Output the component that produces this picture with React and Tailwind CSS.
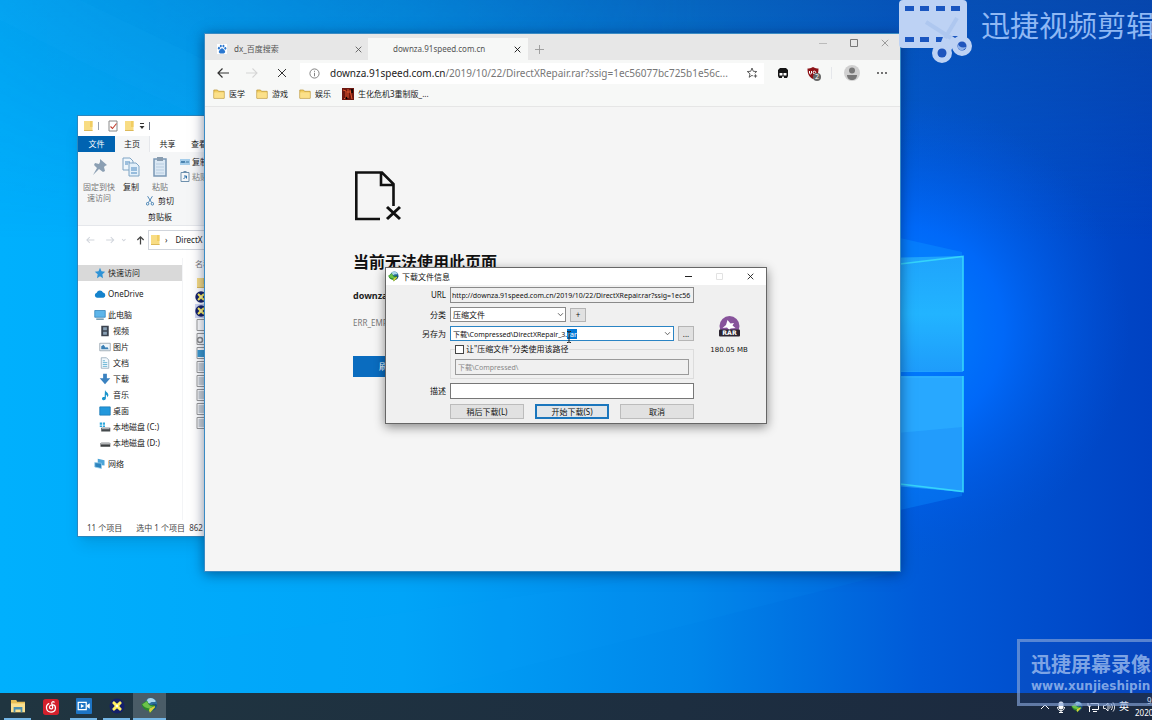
import React, { useEffect, useRef } from "react";

const Wallpaper = () => (
  <svg className="absolute inset-0 h-full w-full" viewBox="0 0 1152 720" preserveAspectRatio="none" aria-hidden="true">
    <defs>
      <linearGradient id="base" x1="0" y1="0" x2="1152" y2="0" gradientUnits="userSpaceOnUse">
        <stop offset="0" stopColor="#00b0fd" />
        <stop offset="0.35" stopColor="#00a4f8" />
        <stop offset="0.6" stopColor="#0086ea" />
        <stop offset="0.8" stopColor="#005ad8" />
        <stop offset="1" stopColor="#0042c2" />
      </linearGradient>
      <linearGradient id="top" x1="0" y1="0" x2="0" y2="240" gradientUnits="userSpaceOnUse">
        <stop offset="0" stopColor="#0b4a9c" stopOpacity="0.55" />
        <stop offset="1" stopColor="#0b4a9c" stopOpacity="0" />
      </linearGradient>
      <linearGradient id="topFade" x1="0" y1="0" x2="700" y2="0" gradientUnits="userSpaceOnUse">
        <stop offset="0" stopColor="#fff" stopOpacity="0.25" />
        <stop offset="1" stopColor="#fff" />
      </linearGradient>
      <mask id="fade">
        <rect width="1152" height="720" fill="url(#topFade)" />
      </mask>
      <radialGradient id="glow" cx="900" cy="330" r="230" gradientUnits="userSpaceOnUse">
        <stop offset="0" stopColor="#0084ff" />
        <stop offset="0.45" stopColor="#006cff" stopOpacity="0.85" />
        <stop offset="1" stopColor="#0054e0" stopOpacity="0" />
      </radialGradient>
      <linearGradient id="pane" x1="0" y1="0" x2="0" y2="1">
        <stop offset="0" stopColor="#1fa4fc" />
        <stop offset="0.5" stopColor="#22b4ff" />
        <stop offset="1" stopColor="#1e9cfb" />
      </linearGradient>
    </defs>
    <rect width="1152" height="720" fill="url(#base)" />
    <rect width="1152" height="240" fill="url(#top)" mask="url(#fade)" />
    <rect width="1152" height="720" fill="url(#glow)" />
    <path d="M900 238 962 252V256L900 264Z" fill="#0a8cff" opacity="0.5" />
    <path d="M900 484 962 492V496L900 510Z" fill="#0a8cff" opacity="0.4" />
    <path d="M0 0H80L205 60V120L78 60 0 20Z" fill="#22b8ff" opacity="0.08" />
    <path d="M205 640 700 571H900L420 693H205Z" fill="#12a0ff" opacity="0.08" />
    <path d="M600 265 963 256V371L600 372Z" fill="url(#pane)" />
    <path d="M600 377 963 376V492L600 460Z" fill="#229cfc" />
    <path d="M600 377 963 376V427L600 460Z" fill="#28a8ff" />
    <path d="M900 264 963 256.500V371M963 376V491.500L900 484" fill="none" stroke="#35d4fb" strokeWidth="1.600" />
    <path d="M900 371.500H963M900 377H963" stroke="#35bcff" strokeWidth="0.600" />
  </svg>
);

const Folder = ({ className = "h-3 w-3" }) => (
  <svg viewBox="0 0 12 12" className={className} aria-hidden="true">
    <path d="M.8 2h3.700l1 1.300h5.700v7H.8z" fill="#f3cf62" stroke="#b98f2c" strokeWidth="0.700" />
    <path d="M1.200 4.400h9.600v5.500H1.200z" fill="#fbe08a" />
  </svg>
);

const FolderTall = ({ className = "h-3 w-3 shrink-0" }) => (
  <svg viewBox="0 0 12 12" className={className} aria-hidden="true">
    <path d="M2 1h8.500v10H2z" fill="#f8dc83" />
    <path d="M8 1h2.500v6H8z" fill="#f1cd62" />
    <path d="M2 10h8.500v1H2z" fill="#dcb95a" />
  </svg>
);

const Cross = ({ className, width = 1.2 }) => (
  <svg viewBox="0 0 10 10" className={className} fill="none" stroke="currentColor" strokeWidth={width} aria-hidden="true">
    <path d="M1 1l8 8M9 1L1 9" />
  </svg>
);

const Chevron = ({ className }) => (
  <svg viewBox="0 0 10 10" className={className} fill="none" stroke="currentColor" strokeWidth="1.300" aria-hidden="true">
    <path d="M1.500 3.200L5 6.800l3.500-3.600" />
  </svg>
);

const Globe = ({ className }) => (
  <svg viewBox="0 0 20 20" className={className} aria-hidden="true">
    <circle cx="11.500" cy="8.500" r="7.500" fill="#2d6f9c" />
    <path d="M8 2c4-2 8 0 9.500 3-2 2-4 0-6 1.500S8 8 6 6z" fill="#a9d6ea" />
    <path d="M13 9c2-2 4-1 6 0-.5 4-3 7-6 7z" fill="#1d4f7c" />
    <path d="M.5 8.500L7 4l2 3.500c1.500 2 4 2.500 6.500 1.500L17 12l-6.500 7L9 16C5 16 2 13 .5 8.500z" fill="#2a8a2c" />
    <path d="M1.500 8.500L7 5l1.500 3c1.500 2.500 3.500 3.500 6.500 2.500l-5 3C6 13 3 12 1.500 8.500z" fill="#6cc24a" />
    <path d="M10 13.500l6-3 .5 1.500-6 6.500-1-2.500z" fill="#d9cf3a" />
  </svg>
);

const Film = () => (
  <svg viewBox="0 0 18 18" className="h-4 w-4" aria-hidden="true">
    <rect width="18" height="18" rx="1" fill="#1d74c4" />
    <path d="M2.500 5h9v8h-9z" fill="none" stroke="#fff" strokeWidth="1.400" />
    <path d="M5.500 6.800v4.400L9.300 9zM12.500 8l3-2v6l-3-2z" fill="#fff" />
  </svg>
);

const CrossBall = ({ className }) => (
  <svg viewBox="0 0 18 18" className={className} aria-hidden="true">
    <circle cx="9" cy="9" r="8.500" fill="#14206a" />
    <path d="M3.500 5.500l2-2L9 6.500l3.500-3 2 2-3 3.500 3 3.500-2 2L9 11.500l-3.500 3-2-2L6.500 9z" fill="#ffef62" />
    <circle cx="9" cy="9" r="1.300" fill="#fff" />
  </svg>
);

const sideIcons = {
  star: <path d="M8 1l2 4.600 5 .6-3.800 3.300L12 15l-4-2.700L4 15l.9-5.300L1 6.200l5-.6z" fill="#2f93d6" />,
  cloud: <path d="M4 13a3.500 3.500 0 01-.4-6.800A4.500 4.500 0 0112 6a3.600 3.600 0 01.6 7z" fill="#1583cc" />,
  pc: (
    <>
      <path d="M1 2h14v9H1z" fill="#5db5ea" stroke="#2c7fb5" />
      <path d="M3 13.500h10" stroke="#3f7391" strokeWidth="1.500" />
    </>
  ),
  video: (
    <>
      <path d="M3 1h10v14H3z" fill="#3c4450" />
      <path d="M5.500 3h5v4h-5zM5.500 9h5v4h-5z" fill="#8aa1b5" />
    </>
  ),
  image: (
    <>
      <path d="M1 3h14v10H1z" fill="#eef5fa" stroke="#8b9aa5" />
      <path d="M3 11V7l3-2 3 4 2-1 2 3z" fill="#3a7fb5" />
    </>
  ),
  doc: (
    <>
      <path d="M3 1h7l3 3v11H3z" fill="#f1f8fc" stroke="#8ba3b3" />
      <path d="M5 5h3M5 7.500h6M5 10h6M5 12.500h6" stroke="#48a5cc" />
    </>
  ),
  down: <path d="M5.500 1h5v6H15l-7 8-7-8h4.500z" fill="#3b82c0" />,
  music: <path d="M8 1c.5 3 4.500 3.500 4.500 7.500L11 11c0-3-1.500-3.500-1.800-3.500V12c0 4-5.700 3.500-5.200.5.300-1.800 2.500-2.300 3.500-1.700z" fill="#1a94cc" />,
  desk: <path d="M1 2.500h14v11H1z" fill="#2298dc" stroke="#1a78b4" />,
  diskC: (
    <>
      <path d="M1 2h3v3H1zM5 2h3v3H5zM1 6h3v2H1zM5 6h3v2H5z" fill="#2ba7dc" />
      <path d="M3 9h12v5H3z" fill="#454a4d" />
      <path d="M4 9h10v2H4z" fill="#a9afb3" />
    </>
  ),
  disk: (
    <>
      <path d="M2 8h13v5H2z" fill="#3d3f41" />
      <path d="M3 7h11l1 3H2z" fill="#b4b6b8" />
    </>
  ),
  net: (
    <>
      <path d="M5 1l9 2v7l-9-1z" fill="#4ba4d8" />
      <path d="M1 6l9 1v7l-9-2z" fill="#2d83bd" stroke="#9ad0ec" />
    </>
  ),
};

const sideGroups = [
  { icon: "star", name: "快速访问", selected: true },
  { icon: "cloud", name: "OneDrive" },
  {
    icon: "pc",
    name: "此电脑",
    children: [
      { icon: "video", name: "视频" },
      { icon: "image", name: "图片" },
      { icon: "doc", name: "文档" },
      { icon: "down", name: "下载" },
      { icon: "music", name: "音乐" },
      { icon: "desk", name: "桌面" },
      { icon: "diskC", name: "本地磁盘 (C:)" },
      { icon: "disk", name: "本地磁盘 (D:)" },
    ],
  },
  { icon: "net", name: "网络" },
];

const SideRow = ({ item, nested }) => (
  <a
    href="#"
    className={`flex h-4 items-center gap-[2px] whitespace-nowrap ${nested ? "pl-[21px]" : "pl-4"} ${item.selected ? "bg-[#d9d9d9]" : ""}`}
  >
    <svg viewBox="0 0 16 16" className="h-3 w-3 shrink-0" fill="none" aria-hidden="true">
      {sideIcons[item.icon]}
    </svg>
    {item.name}
  </a>
);

const FileIcon = ({ kind }) => {
  if (kind === "folder") return <FolderTall />;
  if (kind === "app") return <CrossBall className="h-3 w-3 shrink-0" />;
  return (
    <svg viewBox="0 0 12 12" className="h-3 w-3 shrink-0" fill="none" aria-hidden="true">
      <path d="M2 .5h8v11H2z" fill="#fff" stroke="#9a9a9a" />
      {kind === "text" && <path d="M3.500 3h6M3.500 5h6M3.500 7h6M3.500 9h6" stroke="#9aa5ad" />}
      {kind === "gear" && <circle cx="5" cy="7" r="2.500" stroke="#8d8d8d" strokeWidth="1.500" />}
      {kind === "image" && <path d="M2.500 3h7v7h-7z" fill="#3d9bd0" />}
    </svg>
  );
};

const files = ["folder", "app", "app", "blank", "gear", "image", "text", "text", "text", "text", "text"];

function Explorer() {
  return (
    <section className="absolute left-[77px] top-[115px] flex h-[422px] w-[140px] flex-col overflow-hidden border border-[#2c86bd] bg-white font-['Noto_Sans','Noto_Sans_CJK_SC',sans-serif] text-[8px] text-[#222] shadow-lg">
      <div className="flex h-5 shrink-0 items-center gap-1 pl-1">
        <FolderTall />
        <span className="h-2 w-px bg-gray-400" />
        <svg viewBox="0 0 12 12" className="ml-1 h-3 w-3" fill="none" aria-hidden="true">
          <path d="M2 1h8v10H2z" stroke="#8a8a8a" />
          <path d="M3.500 6.500l2 2 4-5" stroke="#c2402f" strokeWidth="1.100" />
        </svg>
        <FolderTall />
        <svg viewBox="0 0 6 8" className="h-2 w-[6px]" aria-hidden="true">
          <path d="M1 1h4v1H1zM.5 4h5L3 7z" fill="#333" />
        </svg>
        <span className="h-2 w-px bg-gray-500" />
      </div>

      <div className="flex h-4 shrink-0 whitespace-nowrap">
        <button className="w-[37px] shrink-0 bg-[#0063b1] text-white">文件</button>
        <button className="w-[35px] shrink-0 border-r border-gray-200 bg-[#f5f6f7]">主页</button>
        <button className="w-[35px] shrink-0">共享</button>
        <button className="w-7 shrink-0">查看</button>
      </div>

      <div className="flex h-[74px] shrink-0 items-start border-b border-gray-200 bg-[#f5f6f7] pt-1 leading-[11px]">
        <button className="flex w-[42px] shrink-0 flex-col items-center gap-[3px] text-[#777]">
          <svg viewBox="0 0 20 20" className="h-[22px] w-5" aria-hidden="true">
            <path d="M11 2l7 6-2 1-1 1 1 4-2 1-4-3-6 6 4-7-3-3 1-2 4 1 1-2z" fill="#8b9fb3" />
          </svg>
          <span>固定到快<br />速访问</span>
        </button>
        <button className="flex w-[22px] shrink-0 flex-col items-center gap-[3px]">
          <svg viewBox="0 0 20 20" className="h-[22px] w-5" fill="none" stroke="#7fa4c4" aria-hidden="true">
            <path d="M2 1h7l3 3v9H2z" fill="#eef6fc" />
            <path d="M8 6h7l3 3v10H8z" fill="#e3f0fa" />
            <path d="M4 5h5M4 7h3M10 11h6M10 13h6M10 16h6" stroke="#4b88bf" />
          </svg>
          <span>复制</span>
        </button>
        <div className="flex w-9 shrink-0 flex-col items-center gap-[3px] whitespace-nowrap">
          <button className="flex flex-col items-center gap-[3px] text-[#777]">
            <svg viewBox="0 0 20 20" className="h-[22px] w-5" fill="none" aria-hidden="true">
              <path d="M4 2h12v17H4z" fill="#dbe8f4" stroke="#7b98b5" strokeWidth="1.500" />
              <path d="M7 0h6v4H7z" fill="#8a9db0" />
              <path d="M6 7h8M6 10h8M6 13h8M6 16h8" stroke="#b7cce0" />
            </svg>
            <span>粘贴</span>
          </button>
          <button className="flex items-center gap-1">
            <svg viewBox="0 0 10 12" className="h-[10px] w-2" fill="none" stroke="#2a6fa8" aria-hidden="true">
              <path d="M2 0l5 8M8 0L3 8" />
              <circle cx="2" cy="9.500" r="1.600" />
              <circle cx="8" cy="9.500" r="1.600" />
            </svg>
            剪切
          </button>
          <span className="pt-[2px]">剪贴板</span>
        </div>
        <div className="flex shrink-0 flex-col gap-1 whitespace-nowrap pl-[2px]">
          <span className="flex items-center gap-[2px]">
            <svg viewBox="0 0 10 8" className="h-2 w-[10px]" aria-hidden="true">
              <path d="M0 1h10v6H0z" fill="#a5cdea" />
              <path d="M1 5l1-2 1 2 1-2 1 2M6 4h3" fill="none" stroke="#205f93" strokeWidth="0.800" />
            </svg>
            复制
          </span>
          <span className="flex items-center gap-[2px] text-[#888]">
            <svg viewBox="0 0 10 11" className="h-[11px] w-[10px]" fill="none" stroke="#6e90ad" aria-hidden="true">
              <path d="M1 1.500h8v9H1zM3.500.5h3" />
              <path d="M3.500 8l3-3M4 5h2.500v2.500" stroke="#2a6fa8" />
            </svg>
            粘贴
          </span>
        </div>
      </div>

      <div className="flex h-7 shrink-0 items-center">
        <div className="flex w-[70px] shrink-0 items-center gap-2 pl-2 text-gray-300">
          <svg viewBox="0 0 50 10" className="h-[10px] w-[42px]" fill="none" stroke="currentColor" strokeWidth="1.200" aria-hidden="true">
            <path d="M10 5H1M4.500 1.500L1 5l3.500 3.500M24 5h9M29.500 1.500L33 5l-3.500 3.500M43 4l2 2 2-2" />
          </svg>
          <svg viewBox="0 0 10 10" className="h-[9px] w-[9px]" fill="none" stroke="#444" strokeWidth="1.400" aria-hidden="true">
            <path d="M5 9.500V1M1.500 4.500L5 1l3.500 3.500" />
          </svg>
        </div>
        <div className="flex h-5 w-20 shrink-0 items-center gap-1 border border-gray-300">
          <FolderTall />
          <span>›</span>
          <span className="ml-1">DirectX</span>
        </div>
      </div>

      <div className="flex min-h-0 flex-1 pt-1">
        <nav className="flex w-[104px] shrink-0 flex-col gap-[5px] pt-[7px]">
          {sideGroups.map((group) => (
            <div key={group.name}>
              <SideRow item={group} />
              {group.children && group.children.map((child) => <SideRow key={child.name} item={child} nested />)}
            </div>
          ))}
        </nav>
        <div className="flex flex-col border-l border-gray-100 pl-3">
          <span className="flex h-[18px] items-start whitespace-nowrap text-[#777]">名称</span>
          {files.map((kind, index) => (
            <span key={index} className={`flex h-[14px] w-6 items-center ${index === 2 ? "bg-[#cfd6f2]" : ""}`}>
              <FileIcon kind={kind} />
            </span>
          ))}
        </div>
      </div>

      <div className="flex h-4 shrink-0 items-center gap-[14px] whitespace-nowrap pl-[9px] text-[#444]">
        <span>11 个项目</span>
        <span>选中 1 个项目&nbsp; 862</span>
      </div>
    </section>
  );
}

const bookmarks = ["医学", "游戏", "娱乐"];

function Browser() {
  return (
    <section className="absolute left-[204px] top-[33px] flex h-[539px] w-[697px] flex-col border border-[#3a8bc4] bg-[#f5f5f5] font-['Noto_Sans','Noto_Sans_CJK_SC',sans-serif] shadow-[0_2px_12px_rgba(0,20,60,0.5)]">
      <div className="flex h-[26px] shrink-0 items-end bg-[#e7e7e7] text-[8px] text-[#555]">
        <div className="flex h-[22px] w-[163px] items-center gap-1 pl-3 pr-[6px]">
          <svg viewBox="0 0 12 12" className="h-[10px] w-[10px]" aria-hidden="true">
            <rect width="12" height="12" fill="#fff" />
            <g fill="#2b78d0">
              <ellipse cx="2.300" cy="5" rx="1.200" ry="1.600" />
              <ellipse cx="4.600" cy="2.500" rx="1.200" ry="1.700" />
              <ellipse cx="7.700" cy="2.500" rx="1.200" ry="1.700" />
              <ellipse cx="10" cy="5.200" rx="1.200" ry="1.600" />
              <path d="M6 5.200c1.500 0 2 1.500 3 2.400 1.600 1.500.7 3.700-1 3.700H4c-1.800 0-2.600-2.200-1-3.700 1-.9 1.500-2.400 3-2.400z" />
            </g>
          </svg>
          <span className="ml-[3px] flex-1">dx_百度搜索</span>
          <button aria-label="关闭标签页"><Cross className="h-[7px] w-[7px]" /></button>
        </div>
        <div className="flex h-[22px] w-40 items-center bg-[#f7f8f7] pl-[25px] pr-[7px]">
          <span className="flex-1">downza.91speed.com.cn</span>
          <button aria-label="关闭标签页" className="text-black"><Cross className="h-[7px] w-[7px]" /></button>
        </div>
        <button aria-label="新建标签页" className="flex h-[22px] w-[22px] items-center justify-center text-[#999]">
          <svg viewBox="0 0 10 10" className="h-[9px] w-[9px]" stroke="currentColor" aria-hidden="true"><path d="M5 0v10M0 5h10" /></svg>
        </button>
        <div className="flex h-full flex-1 justify-end gap-[23px] pr-[11px] pt-[5px] text-[#888]">
          <button aria-label="最小化" className="h-2 w-2 text-[#bbb]">
            <svg viewBox="0 0 8 8" className="h-2 w-2" stroke="currentColor" aria-hidden="true"><path d="M0 4.500h8" /></svg>
          </button>
          <button aria-label="最大化" className="h-2 w-2">
            <svg viewBox="0 0 8 8" className="h-2 w-2" fill="none" stroke="#777" aria-hidden="true"><path d="M.5.5h7v7h-7z" /></svg>
          </button>
          <button aria-label="关闭" className="h-2 w-2"><Cross className="h-2 w-2" width={1} /></button>
        </div>
      </div>

      <div className="flex h-[26px] shrink-0 items-center bg-[#f7f8f7] px-3 text-[#333]">
        <svg viewBox="0 0 12 12" className="h-3 w-3 shrink-0" fill="none" stroke="currentColor" strokeWidth="1.200" aria-hidden="true">
          <path d="M12 6H1M5.500 1.500L1 6l4.500 4.500" />
        </svg>
        <svg viewBox="0 0 12 12" className="ml-[17px] h-3 w-3 shrink-0" fill="none" stroke="#d5d5d5" strokeWidth="1.100" aria-hidden="true">
          <path d="M0 6h11M6.500 1.500L11 6l-4.500 4.500" />
        </svg>
        <button aria-label="停止" className="ml-[19px] flex shrink-0"><Cross className="h-[10px] w-[10px]" width={1} /></button>
        <div className="ml-[13px] flex h-[21px] min-w-0 flex-1 items-center bg-white pl-[9px] pr-[6px]">
          <svg viewBox="0 0 12 12" className="h-[11px] w-[11px] shrink-0" fill="none" stroke="#777" aria-hidden="true">
            <circle cx="6" cy="6" r="5" />
            <path d="M6 5.200V9M6 3v1.200" />
          </svg>
          <span className="ml-[10px] flex-1 whitespace-nowrap text-[10px] text-[#777]">
            <span className="text-[#222]">downza.91speed.com.cn</span>/2019/10/22/DirectXRepair.rar?ssig=1ec56077bc725b1e56c...
          </span>
          <svg viewBox="0 0 14 14" className="h-3 w-3 shrink-0" fill="none" stroke="#444" aria-hidden="true">
            <path d="M8 10.300L7 9.700 3.700 12l1-4L1.500 5.300l4-.3L7 1.200 8.500 5l4 .3-2.300 2M11 8.500v4M9 10.500h4" />
          </svg>
        </div>
        <svg viewBox="0 0 12 12" className="ml-[13px] h-3 w-3 shrink-0" aria-hidden="true">
          <path d="M3 1h6l2 2v6l-1 2H7V9.500H5V11H2L1 9V3z" fill="#151515" />
          <path d="M2.500 6h3v2.500h-3zM6.500 6h3v2.500h-3z" fill="#fff" />
        </svg>
        <span className="relative ml-[18px] h-3 w-3 shrink-0">
          <svg viewBox="0 0 12 12" className="h-3 w-3" aria-hidden="true">
            <path d="M6 0c2 1.500 4 1.500 5.500 1.500C11.500 7 10 10 6 12 2 10 .5 7 .5 1.500 2 1.500 4 1.500 6 0z" fill="#8d1217" />
            <path d="M2.500 4v2.200c0 1 2 1 2 0V4M7.800 4.200a1.300 1.300 0 100 2.500 1.300 1.300 0 000-2.500" fill="none" stroke="#fff" />
          </svg>
          <span className="absolute left-[6px] top-[6px] h-2 w-2 rounded-sm bg-[#666] text-center text-[7px] leading-2 text-white">2</span>
        </span>
        <span className="ml-3 h-3 w-px bg-gray-200" />
        <svg viewBox="0 0 16 16" className="ml-3 h-4 w-4 shrink-0" aria-hidden="true">
          <circle cx="8" cy="8" r="8" fill="#d0d0d0" />
          <circle cx="8" cy="5.500" r="3" fill="#777" />
          <path d="M3 10h10c0 3-2 5-5 5s-5-2-5-5z" fill="#777" />
        </svg>
        <svg viewBox="0 0 12 12" className="ml-4 h-3 w-3 shrink-0" fill="#333" aria-hidden="true">
          <circle cx="2" cy="6" r="0.900" />
          <circle cx="6" cy="6" r="0.900" />
          <circle cx="10" cy="6" r="0.900" />
        </svg>
      </div>

      <div className="flex h-[21px] shrink-0 items-start gap-[11px] border-b border-[#e6e6e6] bg-[#f7f8f7] pl-2 pt-[2px] text-[8px] leading-3 text-[#222]">
        {bookmarks.map((name) => (
          <a key={name} href="#" className="flex items-center gap-1"><Folder />{name}</a>
        ))}
        <a href="#" className="flex items-center gap-1">
          <svg viewBox="0 0 12 12" className="h-3 w-3" aria-hidden="true">
            <path d="M0 0h12v12H0z" fill="#6d1710" />
            <path d="M1 2l3 1v6L2 11M6 1v9M5 4h5M8 2l2 9" fill="none" stroke="#e2572c" />
            <path d="M10 1v4M4 9l1 2" stroke="#000" strokeWidth="1.500" />
          </svg>
          生化危机3重制版_...
        </a>
      </div>

      <main className="flex flex-1 flex-col items-start pl-[148px] pt-16">
        <svg viewBox="0 0 50 50" className="h-[50px] w-[50px]" fill="none" stroke="#111" strokeWidth="2.600" aria-hidden="true">
          <path d="M27 48H3.300V1.500H29L40.500 13v22M28 2v12h12.500" />
          <path d="M34 36l13 12M47 36L34 48" strokeWidth="3" />
        </svg>
        <h1 className="mt-[29px] text-base font-bold text-[#111]">当前无法使用此页面</h1>
        <p className="mt-[14px] text-[9px] font-bold leading-4 text-[#222]">downza.91speed.com.cn</p>
        <p className="mt-[13px] text-[8px] leading-3 text-[#777]">ERR_EMPTY_RESPONSE</p>
        <button className="mt-[27px] h-[21px] w-[70px] bg-[#0a6cbf] text-[9px] text-white">刷新</button>
      </main>
    </section>
  );
}

function DownloadDialog() {
  const pathRef = useRef(null);

  // Preselect the file extension like the native dialog does
  useEffect(() => {
    const input = pathRef.current;
    input.focus();
    input.setSelectionRange(input.value.length - 3, input.value.length);
  }, []);

  return (
    <form
      onSubmit={(e) => e.preventDefault()}
      className="absolute left-[385px] top-[267px] w-[382px] border border-[#666] bg-[#f0f0f0] font-['Noto_Sans','Noto_Sans_CJK_SC',sans-serif] text-[8px] text-[#111] shadow-[0_3px_10px_rgba(0,0,0,0.45)]"
    >
      <div className="flex h-[17px] items-center bg-white pl-[2px] pr-3">
        <Globe className="h-[11px] w-[11px]" />
        <span className="ml-[3px] flex-1">下载文件信息</span>
        <button type="button" aria-label="最小化" className="mr-6">
          <svg viewBox="0 0 7 7" className="h-[7px] w-[7px]" stroke="#222" aria-hidden="true"><path d="M0 3.500h7" /></svg>
        </button>
        <button type="button" aria-label="最大化" disabled className="mr-6">
          <svg viewBox="0 0 7 7" className="h-[7px] w-[7px]" fill="none" stroke="#e2e2e2" aria-hidden="true"><path d="M.5.5h6v6h-6z" /></svg>
        </button>
        <button type="button" aria-label="关闭"><Cross className="h-[7px] w-[7px]" /></button>
      </div>

      <div className="flex pb-1 pt-[2px]">
        <div className="w-[308px]">
          <div className="flex items-center">
            <label htmlFor="url" className="w-16 pr-1 text-right">URL</label>
            <input
              id="url"
              readOnly
              value="http://downza.91speed.com.cn/2019/10/22/DirectXRepair.rar?ssig=1ec56"
              className="h-4 min-w-0 flex-1 border border-[#8a8a8a] bg-[#f0f0f0] px-px text-[7px]"
            />
          </div>
          <div className="mt-1 flex items-center">
            <label htmlFor="category" className="w-16 pr-1 text-right">分类</label>
            <div className="relative w-[116px]">
              <select id="category" className="h-[15px] w-full appearance-none border border-[#8a8a8a] bg-white pl-[2px]">
                <option>压缩文件</option>
              </select>
              <Chevron className="pointer-events-none absolute right-[2px] top-1 h-[7px] w-[7px] text-[#555]" />
            </div>
            <button type="button" className="ml-1 h-[14px] w-4 border border-[#b5b5b5] bg-[#e1e1e1] leading-3">+</button>
          </div>
          <div className="mt-1 flex items-center">
            <label htmlFor="path" className="w-16 pr-1 text-right">另存为</label>
            <div className="flex h-[15px] w-[224px] items-center border border-[#2a84c4] bg-white">
              <input
                id="path"
                ref={pathRef}
                defaultValue="下载\Compressed\DirectXRepair_3.rar"
                className="h-full min-w-0 flex-1 pl-[2px] text-[7px] caret-transparent outline-none selection:bg-[#0078d7] selection:text-white"
              />
              <button type="button" aria-label="历史路径" className="pr-[2px] text-[#555]"><Chevron className="h-[7px] w-[7px]" /></button>
            </div>
            <button type="button" aria-label="浏览" className="ml-1 h-[15px] w-4 border border-[#b5b5b5] bg-[#e1e1e1] leading-3">...</button>
          </div>
          <div className="ml-16 mt-[2px]">
            <label className="relative z-10 ml-[5px] inline-flex h-3 items-center gap-[2px] bg-[#f0f0f0] align-top">
              <input type="checkbox" className="h-[9px] w-[9px] appearance-none border border-[#444] bg-white" />
              让"压缩文件"分类使用该路径
            </label>
            <div className="-mt-[6px] border border-[#dcdcdc] px-1 pb-[3px] pt-[9px]">
              <input
                disabled
                aria-label="分类路径"
                value="下载\Compressed\"
                className="block h-4 w-full border border-[#9a9a9a] bg-[#f0f0f0] px-[2px] text-[7px] text-[#888]"
              />
            </div>
          </div>
          <div className="mt-1 flex items-center">
            <label htmlFor="desc" className="w-16 pr-1 text-right">描述</label>
            <input id="desc" className="h-4 min-w-0 flex-1 border border-[#777] bg-white px-1" />
          </div>
          <div className="ml-16 mt-[5px] flex justify-between">
            <button type="button" className="h-[15px] w-[74px] border border-[#bcbcbc] bg-[#e1e1e1] leading-3">稍后下载(L)</button>
            <button type="submit" className="h-[15px] w-[74px] border-2 border-[#1a76bd] bg-[#e1e6ea] leading-[10px]">开始下载(S)</button>
            <button type="button" className="h-[15px] w-[74px] border border-[#bcbcbc] bg-[#e1e1e1] leading-3">取消</button>
          </div>
        </div>
        <div className="flex flex-1 flex-col items-center pr-[2px] pt-[29px]">
          <svg viewBox="0 0 42 42" className="h-[21px] w-[21px]" aria-hidden="true">
            <circle cx="21" cy="20" r="20" fill="#87539b" />
            <path d="M17 8l6 7 7-1-3 5 6 5-10 1-2 3-5-5-9 1 7-6z" fill="#fff" />
            <rect y="27" width="42" height="14" rx="2" fill="#2b2430" />
            <text x="21" y="38.500" textAnchor="middle" fontSize="12.500" fontWeight="700" fontFamily="DejaVu Sans" fill="#fff">RAR</text>
          </svg>
          <span className="mt-2 font-['DejaVu_Sans',sans-serif] text-[7px]">180.05 MB</span>
        </div>
      </div>
    </form>
  );
}

function Taskbar() {
  const items = [
    {
      name: "文件资源管理器",
      open: true,
      icon: (
        <svg viewBox="0 0 18 16" className="h-[14px] w-4" aria-hidden="true">
          <path d="M1 1h6l1 2h9v12H1z" fill="#e9bf55" />
          <path d="M1 5h16v10H1z" fill="#fbe08f" />
          <path d="M4 9h10v6h-2v-3H6v3H4z" fill="#4b8fb0" />
        </svg>
      ),
    },
    {
      name: "网易云音乐",
      icon: (
        <svg viewBox="0 0 18 18" className="h-4 w-4" fill="none" stroke="#fff" strokeWidth="1.400" strokeLinecap="round" aria-hidden="true">
          <rect width="18" height="18" rx="3" fill="#d3202c" stroke="none" />
          <path d="M12.500 3.500c-1.500-1-3 0-2.600 1.500l1 4.500c.3 2-3.600 2.300-3.600-.3 0-2 2.500-3 4.300-2.500 3.500 1 3.500 8-2.600 8-6 0-6.500-7.500-2.500-9.500" />
        </svg>
      ),
    },
    { name: "录屏", open: true, icon: <Film /> },
    { name: "DirectX 修复工具", open: true, icon: <CrossBall className="h-4 w-4" /> },
    { name: "IDM", open: true, active: true, icon: <Globe className="h-[17px] w-[17px]" /> },
  ];

  return (
    <footer className="relative z-10 flex h-[27px] items-stretch justify-between bg-linear-to-r from-[#203540] to-[#1b2940]">
      <div className="flex pl-px">
        {items.map((item) => (
          <button
            key={item.name}
            aria-label={item.name}
            className={`flex w-[33px] flex-col items-center ${item.active ? "bg-[#4a5c67]" : ""}`}
          >
            <span className="flex flex-1 items-center">{item.icon}</span>
            {item.open && <span className={`h-[2px] bg-[#74b6e6] ${item.active ? "w-full" : "w-[27px]"}`} />}
          </button>
        ))}
      </div>
      <div className="flex items-center gap-1 overflow-hidden font-['Noto_Sans','Noto_Sans_CJK_SC',sans-serif] text-white">
        <svg viewBox="0 0 12 12" className="h-3 w-3" fill="none" stroke="currentColor" aria-hidden="true"><path d="M2 8l4-4 4 4" /></svg>
        <svg viewBox="0 0 12 12" className="h-3 w-3" fill="none" stroke="currentColor" aria-hidden="true">
          <rect x="4" y="1" width="4" height="7" rx="1.500" fill="#fff" />
          <path d="M2.500 6c0 5 7 5 7 0M6 9.500V12M4 11.500h4" />
        </svg>
        <Globe className="h-3 w-3" />
        <svg viewBox="0 0 12 12" className="h-3 w-3" fill="none" stroke="currentColor" aria-hidden="true">
          <path d="M3.500 2.500h8v6H5M6 10.500h4M1 2v3h3M2.500 5v6" />
        </svg>
        <svg viewBox="0 0 12 12" className="h-3 w-3" fill="none" stroke="currentColor" strokeWidth="0.900" aria-hidden="true">
          <path d="M.5 4.500h2L5 2v8L2.500 7.500h-2zM6.500 4.500c.8 1 .8 2 0 3M8.200 3c1.500 2 1.500 4 0 6M10 1.500c2.200 3 2.200 6 0 9" />
        </svg>
        <span className="w-3 text-[10px]">英</span>
        <div className="flex w-[17px] flex-col whitespace-nowrap text-[8px] leading-3">
          <span className="pl-3">9</span>
          <span>2020</span>
        </div>
      </div>
    </footer>
  );
}

const Watermarks = () => (
  <div className="pointer-events-none">
    <div className="absolute left-[899px] top-0 z-20 flex items-start gap-2 whitespace-nowrap font-['Noto_Sans_CJK_SC',sans-serif]">
      <svg viewBox="0 0 74 64" className="h-16 w-[74px] shrink-0" fill="none" aria-hidden="true">
        <path d="M4 0h60q4 0 4 4v44H4q-4 0-4-4V4q0-4 4-4z" fill="#bdd2f4" />
        <path d="M57 35l-14 11 8 5 12-12z" fill="#bdd2f4" />
        <circle cx="43" cy="53" r="7" stroke="#bdd2f4" strokeWidth="6" />
        <circle cx="63" cy="46" r="7" stroke="#bdd2f4" strokeWidth="6" />
        <path d="M6 6h9v5H6zM21 6h9v5h-9zM37 6h9v5h-9zM52 6h9v5h-9zM6 37h9v5H6zM21 37h9v5h-9zM37 37h7l-2 5h-5zM53 36h6l-3 2z" fill="#1a56c0" />
        <path d="M27 22l25 16M58 18L46 38" stroke="#aec7ef" strokeWidth="4" />
        <circle cx="43" cy="53" r="4.500" fill="#1f55bd" />
        <circle cx="63" cy="46" r="4.500" fill="#1f55bd" />
        <path d="M59 44c1 3 4 4 8 3-1 3-6 5-8 1z" fill="#8fb2ea" />
      </svg>
      <span className="text-[29px] leading-[48px] text-[#8fb8f4]">迅捷视频剪辑</span>
    </div>
    <div className="absolute left-[1017px] top-[639px] z-20 h-[67px] w-[220px] whitespace-nowrap border-[3px] border-[#8facdc]/60 bg-[#1e50b0]/20 pl-[11px] pt-2 font-bold text-[#8eb1ea]/90">
      <p className="font-['Noto_Sans_CJK_SC',sans-serif] text-xl leading-7">迅捷屏幕录像</p>
      <p className="font-['DejaVu_Sans',sans-serif] text-[12px] leading-4">www.xunjieshipin</p>
    </div>
  </div>
);

export default function App() {
  return (
    <div className="relative flex min-h-screen flex-col justify-end overflow-hidden bg-[#0078d7]">
      <Wallpaper />
      <Explorer />
      <Browser />
      <DownloadDialog />
      {/* Text cursor over the file name */}
      <svg viewBox="0 0 6 12" className="pointer-events-none absolute left-[566px] top-[331px] h-3 w-[6px]" fill="none" stroke="#222" aria-hidden="true">
        <path d="M1 .5h1.500l.5.500.5-.5H5M3 1v10M1 11.500h1.500L3 11l.5.500H5" />
      </svg>
      <Taskbar />
      <Watermarks />
    </div>
  );
}
